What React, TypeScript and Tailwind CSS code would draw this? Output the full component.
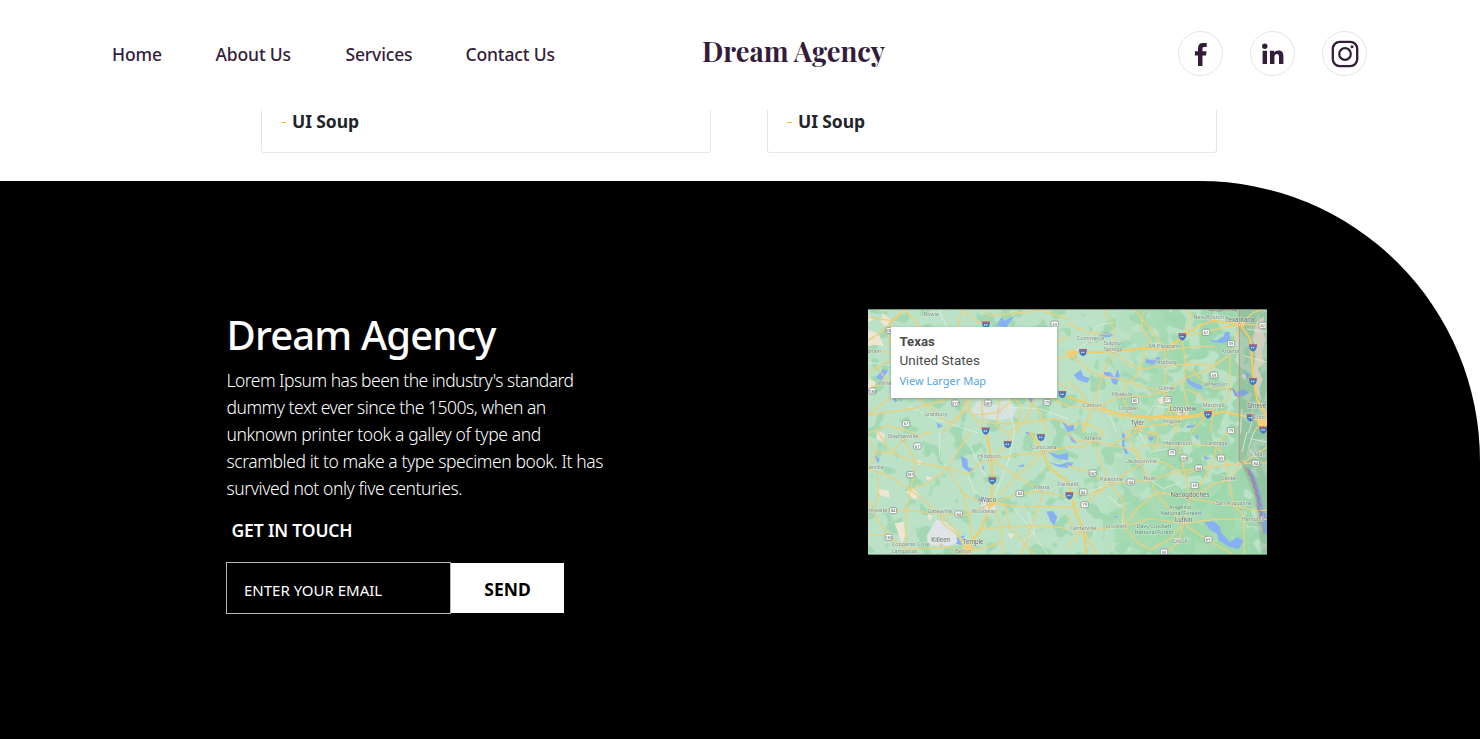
import React from "react";

type Quad = { x: number; y: number; minor: string[]; roads: string[]; water: string[]; sand: string[] };

const quads: Quad[] = [
  {
    x: 0,
    y: 0,
    minor: ["M0 160 L70 170 L95 60", "M210 0 L240 60", "M120 290 L200 330 L330 372", "M420 270 L440 372 M330 290 L520 300 L600 330"],
    roads: [
      "M0 25 L70 35 L110 0", "M0 95 Q60 60 110 0", "M110 0 L160 60", "M270 55 L280 0 L350 55", "M345 0 L365 20 L520 5 L600 30",
      "M68 40 Q55 80 68 115", "M0 190 L70 150", "M0 130 Q50 125 68 130", "M10 235 L60 220 L25 170", "M68 265 L0 318 L130 300 L240 270",
      "M68 230 L150 265 L240 345 L300 300 L310 267", "M0 372 L60 350 L140 372", "M220 372 L270 330 L300 270", "M285 270 L350 372",
      "M310 320 L390 310 L440 270 L460 290 L445 372", "M340 270 L345 340 L420 345 L560 330 L600 340", "M395 267 L385 350 L420 372 L470 340 L500 270",
      "M470 267 L510 300 L540 372", "M567 220 L600 240", "M567 150 L600 140", "M545 267 L600 290", "M567 100 L600 80",
    ],
    water: ["M385 50 L400 25 L410 35 L440 20 L415 55Z", "M25 205 L45 180 L60 185 L40 215Z", "M75 265 L90 275 L80 280Z", "M340 300 L355 320 L345 325Z", "M385 305 L400 285 L405 300 L390 325Z", "M205 340 L225 350 L210 358Z", "M580 335 L600 350 V370Z", "M480 267 L495 270 L490 285Z"],
    sand: ["M0 65 L30 75 L45 110 L20 105 L0 110Z", "M45 15 L65 30 L55 50 L40 38Z", "M5 210 L22 222 L12 240 L0 238Z", "M0 20 L15 30 L0 38Z"],
  },
  {
    x: 597,
    y: 0,
    minor: ["M10 140 L60 100 L90 50 L140 40", "M120 300 L150 372 M210 355 L260 290 L330 300", "M525 300 L520 372 M545 372 L560 320 L600 350", "M540 60 L600 70 M530 140 L600 160"],
    roads: [
      "M0 128 L45 130 L140 128 L220 118 L295 122 L350 80 L400 48 L440 35 L518 45 L600 50",
      "M295 122 L330 100 L345 85 L450 60 L518 45", "M518 45 L550 90 L560 215 L570 270 L590 310 L600 320",
      "M110 0 L140 60 L140 128 L110 190 L75 295 L50 372", "M200 0 L250 60 L295 122 L292 250 L330 372",
      "M0 130 L60 180 L100 200 L160 210 L230 235 L300 245", "M140 128 L180 160 L220 182 L290 170 L380 165 L440 170 L490 135",
      "M0 262 L80 290 L160 315 L240 325 L315 328 L430 318 L470 308 L550 325 L600 340", "M0 292 L75 298 L165 325 L350 328 L430 318",
      "M75 298 L165 262 L235 262 L300 245 L360 205 L430 180 L490 135 L518 45", "M235 0 Q210 50 240 80 T230 110 Q235 150 218 180",
      "M345 85 L355 160 L350 240 L365 300 L350 318", "M490 135 L485 270 L440 300 L430 372", "M0 40 Q60 80 130 75", "M45 372 L75 298 L40 250 L0 215",
      "M165 262 L175 230 L205 205 L218 180", "M165 262 L185 300 L210 355 L300 345 L440 300", "M215 355 L245 335 L310 305 L350 315", "M210 355 L170 372",
      "M300 245 L310 300 L350 315 L320 372", "M355 160 L400 210 L440 240 L485 235", "M350 0 L375 20 L350 80", "M360 240 L400 260 L440 300 L370 372", "M518 45 L560 10 L590 0", "M600 350 L570 355 L560 372", "M0 350 Q60 330 110 372", "M295 122 L400 112 L443 112",
    ],
    water: [
      "M97 78 L118 68 L138 76 L130 84 L112 84Z", "M425 90 L448 95 L470 82 L475 68 L489 70 L488 95 L465 102 L440 100Z",
      "M20 198 L42 182 L48 200 L68 208 L62 222 L32 212Z", "M110 188 L130 190 L142 205 L152 180 L158 200 L150 228 L138 224 L130 206 L112 198Z",
      "M235 150 L258 154 L275 142 L283 155 L262 168 L238 162Z", "M355 200 L370 215 L405 230 L404 242 L380 236 L362 222Z",
      "M495 238 L510 250 L525 240 L548 250 L530 262 L505 262Z", "M540 318 L560 320 L556 338 L540 332Z", "M0 350 L20 345 L22 362 L0 370Z", "M358 350 L385 348 L380 355 L360 358Z", "M530 185 L550 198 L540 208Z",
    ],
    sand: ["M570 40 L590 25 L582 60 L595 90 L582 130 L590 160 L570 180 L585 210 L575 240 L580 270 L565 240 L560 190 L568 130 L560 90Z", "M275 270 L295 262 L300 278 L280 284Z", "M525 200 L535 195 L534 210Z"],
  },
  {
    x: 0,
    y: 369,
    minor: ["M215 0 L215 75 L238 108", "M305 40 L345 120 L370 150", "M440 0 L420 90 L380 190", "M430 220 L480 280 L540 369", "M480 240 L500 300 L440 350", "M300 130 L320 180 L360 200"],
    roads: [
      "M0 20 L25 60 L70 62 L105 22 L190 0", "M30 0 L70 62 L145 92 L238 108 L300 128 L340 90 L370 82", "M25 60 L0 110", "M105 22 L145 92 L128 172 L115 235 L112 352",
      "M0 112 L60 130 L128 175 L215 245 L270 300 L295 350", "M128 172 L185 150 L238 108 L300 10 L305 0", "M238 108 L285 185 L300 240 L312 325",
      "M355 0 L370 82 L374 145 L370 215 L340 290 L290 360", "M370 82 L418 38 L430 0", "M370 82 L440 70 L527 60 L600 45", "M370 82 L450 135 L520 178 L600 195",
      "M485 0 L527 60 L540 105 L600 150", "M390 190 L450 130 L527 60", "M370 215 L450 185 L520 178", "M0 238 L115 235 L215 245 L290 250 L370 215 L450 222 L600 225",
      "M0 200 L15 240 L60 310 L112 352 L180 350 L240 345 L290 360", "M28 130 L32 190 L15 240", "M0 310 L60 310", "M385 230 L400 300 L405 369", "M410 215 L425 285 L470 335 L500 369",
      "M290 350 L340 290 L430 285 L530 280 L600 290", "M290 360 L340 350 L405 330", "M527 178 L510 230 L470 335 L460 369", "M285 185 L345 215", "M215 245 L225 275 L270 310 L292 350",
    ],
    water: ["M278 72 L298 82 L300 105 L318 112 L305 122 L284 105Z", "M328 205 L345 190 L350 212 L338 218Z", "M538 58 L570 70 L600 62 V85 L572 80 L558 76Z", "M540 90 L575 98 L600 90 V108 L572 104Z", "M535 238 L555 238 L568 255 L558 282 L548 268Z", "M258 320 L290 310 L280 340 L265 335Z", "M20 72 L35 80 L30 95Z", "M448 102 L470 96 L465 106Z", "M470 0 L490 0 L482 10Z", "M342 100 L350 108 L345 115Z"],
    sand: ["M28 0 L48 5 L45 28 L28 20Z", "M115 180 L135 172 L152 190 L140 200Z", "M28 172 L60 178 L62 195 L38 188Z", "M82 275 L105 272 L110 310 L102 332 L88 290Z", "M150 85 L160 90 L152 98Z", "M420 305 L435 308 L430 318Z", "M180 248 L192 252 L185 262Z", "M175 135 L190 138 L180 144Z"],
  },
  {
    x: 597,
    y: 369,
    minor: ["M540 0 L525 60 M560 0 L545 50 L580 90 M600 30 L550 20", "M120 190 L170 230 L165 290", "M250 145 L290 170 L340 150", "M60 180 L120 160 L150 130", "M215 0 L250 60 L300 50"],
    roads: [
      "M0 0 L30 30 L80 25 L130 40 L210 0", "M80 25 L100 90 L130 155 L170 210 L170 283 L210 330 L250 352", "M0 45 L50 45 L80 25 L110 0",
      "M180 0 L220 95 L250 145 L270 190 L350 275", "M130 40 L215 55 L220 95 L130 155 L90 185 L25 240 L50 295 L58 369", "M0 180 L70 188 L130 155",
      "M0 250 L25 300 L50 295", "M50 295 L170 283 L250 260 L350 275", "M130 155 L250 145 L330 118 L395 108 L520 95 L600 92", "M220 95 L290 90 L350 130 L400 110",
      "M335 40 L370 200 L350 275", "M220 40 L335 40 L450 40 L480 0", "M450 40 L480 95 L485 145 L500 220 L530 250 L532 369", "M370 200 L440 155 L485 145 L520 95",
      "M370 200 L500 220 L560 235 L600 235", "M350 275 L440 262 L560 262 L600 262", "M350 275 L400 310 L425 325 L500 369", "M350 275 L335 330 L290 369",
      "M170 283 L210 230 L270 180 L330 190 L370 200", "M0 100 L60 120 L130 155", "M250 352 L310 320 L350 275", "M0 230 L30 210", "M450 40 L430 110 L370 200", "M0 345 L50 295 L90 369", "M530 92 L600 45", "M235 20 L270 0 M260 60 L275 10 L240 0",
    ],
    water: ["M165 0 L175 10 L172 40 L185 65 L175 66 L165 42Z", "M398 252 L410 270 L440 268 L460 285 L460 300 L490 330 L510 315 L530 325 L515 352 L488 345 L455 325 L450 305 L430 295Z", "M540 102 L562 130 L578 180 L590 235 L600 255 V310 L590 300 L578 250 L568 200 L558 160 L545 128Z", "M0 0 L15 12 L32 35 L15 30Z", "M240 15 L252 5 L260 20 L250 28Z", "M382 12 L395 10 L392 25Z", "M0 90 L20 92 L12 105 L0 102Z", "M410 72 L430 78 L415 84Z", "M388 242 L402 238 L404 248Z", "M142 252 L155 254 L148 259Z"],
    sand: ["M320 320 L340 322 L330 332Z"],
  },
];

const places: [number, number, string, boolean?][] = [
  [190, 22, "Bowie"], [19, 133, "aham"], [52, 228, "Mine"], [203, 322, "Granbury"],
  [667, 92, "Commerce"], [735, 107, "Sulphur"], [735, 125, "Springs"], [888, 117, "Mt Pleasant"], [892, 165, "Pittsburg"], [896, 242, "Gilmer"],
  [762, 260, "Mineola"], [672, 293, "Canton"], [780, 302, "Lindale"], [945, 307, "Longview", true], [1036, 293, "Marshall"], [912, 341, "Kilgore"],
  [808, 347, "Tyler", true], [1022, 31, "New Boston"], [1115, 40, "Texarkana", true], [1087, 132, "Atlanta"], [1041, 232, "Jefferson"], [1166, 298, "Shreve", true], [1172, 330, "Bossi"],
  [105, 387, "Stephenville"], [527, 420, "Corsicana"], [364, 446, "Hillsboro"], [25, 480, "erville"], [521, 541, "Mexia"], [361, 579, "Waco", true], [347, 612, "Woodway"],
  [215, 612, "Gatesville"], [30, 608, "thwaite"], [218, 700, "Killeen", true], [315, 705, "Temple", true], [128, 712, "Copperas Cove"], [110, 732, "Lampasas"], [286, 731, "Belton"], [600, 530, "Fairfield"],
  [675, 394, "Athens"], [930, 409, "Henderson"], [1044, 408, "Carthage"], [820, 462, "Jacksonville"], [846, 512, "Rusk"], [730, 516, "Palestine"],
  [1083, 512, "Center"], [966, 565, "Nacogdoches", true], [1097, 587, "San Augustine"], [947, 638, "Lufkin", true], [936, 601, "Angelina"], [936, 619, "National Forest"],
  [858, 657, "Davy Crockett"], [858, 676, "National Forest"], [744, 656, "Crockett"], [645, 662, "Centerville"], [937, 702, "Diboll"], [1155, 637, "Hemphill"], [1176, 440, "Man"],
];

const dots = [[664, 98], [735, 128], [890, 124], [891, 170], [896, 247], [765, 267], [674, 298], [782, 308], [945, 315], [1038, 300], [808, 356], [913, 347], [1024, 36], [1115, 48], [1085, 137], [1040, 239], [105, 392], [527, 429], [364, 452], [521, 547], [361, 584], [345, 597], [215, 617], [15, 613], [220, 708], [314, 713], [675, 399], [930, 413], [1044, 413], [818, 467], [847, 516], [729, 524], [1083, 516], [966, 570], [1097, 592], [947, 645], [766, 653], [645, 668]];

const routes: [number, number, string][] = [
  [65, 64, "281"], [560, 45, "69"], [14, 246, "180"], [262, 282, "377"], [360, 282, "287"], [537, 280, "175"], [114, 344, "67"],
  [1014, 70, "67"], [1089, 104, "59"], [1038, 198, "59"], [801, 275, "80"], [899, 272, "271"], [1089, 365, "79"], [1184, 49, "82"],
  [148, 411, "67"], [127, 497, "281"], [75, 605, "84"], [272, 615, "84"], [62, 685, "183"], [455, 554, "84"],
  [912, 431, "79"], [947, 447, "259"], [1059, 447, "59"], [992, 477, "84"], [674, 492, "287"], [788, 519, "84"], [646, 549, "84"], [650, 587, "79"], [980, 530, "59"], [1163, 463, "84"], [1021, 691, "69"], [888, 729, "59"],
];

const shields = [[354, 48], [583, 256], [353, 366], [645, 130], [943, 83], [1155, 116], [1155, 217], [1020, 317], [1148, 326], [1186, 363], [519, 385], [419, 406], [373, 515], [604, 560]];

function TexasMap() {
  return (
    <svg viewBox="0 0 1197 738" preserveAspectRatio="none" className="block h-full w-full" aria-hidden="true">
      <defs>
        <filter id="woods" x="0" y="0" width="1" height="1" colorInterpolationFilters="sRGB">
          <feTurbulence type="fractalNoise" baseFrequency="0.02" numOctaves="2" seed="7" />
          <feColorMatrix values="0 0 0 0 0.64  0 0 0 0 0.85  0 0 0 0 0.70  18 0 0 0 -10.4" />
        </filter>
        <filter id="forest" x="0" y="0" width="1" height="1" colorInterpolationFilters="sRGB">
          <feTurbulence type="fractalNoise" baseFrequency="0.02" numOctaves="2" seed="12" />
          <feColorMatrix values="0 0 0 0 0.62  0 0 0 0 0.845  0 0 0 0 0.68  18 0 0 0 -7.9" />
        </filter>
        <filter id="soft" x="0" y="0" width="1" height="1">
          <feGaussianBlur stdDeviation="0.9" />
        </filter>
        <linearGradient id="eastward">
          <stop offset=".58" stopColor="#fff" stopOpacity="0" />
          <stop offset=".8" stopColor="#fff" />
        </linearGradient>
        <mask id="east" maskUnits="userSpaceOnUse" x="0" y="0" width="1197" height="738">
          <rect width="1197" height="738" fill="url(#eastward)" />
        </mask>
      </defs>
      <g filter="url(#soft)">
        <rect width="1197" height="738" fill="#bbe2c6" />
        <rect width="1197" height="738" filter="url(#woods)" />
        <g mask="url(#east)">
          <rect width="1197" height="738" filter="url(#forest)" />
        </g>
        <path d="M740 600L860 560L1110 500L1150 738H860L740 700Z" fill="#9fd8ad" opacity=".7" />
        {quads.map((q) => (
          <g key={`${q.x}-${q.y}`} transform={`translate(${q.x} ${q.y})`} fill="none" strokeLinejoin="round">
            {q.sand.map((d) => <path key={d} d={d} fill="#eee5d3" stroke="#eee5d3" strokeWidth="4" />)}
            {q.water.map((d) => <path key={d} d={d} fill="#86b1f5" />)}
          </g>
        ))}
        <g fill="#e0e4e6">
          <path d="M205 632L232 640L262 665L268 700L245 712L180 708L176 680Z" />
          <path d="M305 310L330 275L380 285L420 272L445 300L435 325L390 335L340 325Z" opacity=".8" />
          <path d="M340 570L375 570L384 600L365 616L338 600Z" />
          <path d="M915 300L955 295L960 320L935 325Z" />
        </g>
        <path d="M1114 0H1197V738H1180L1160 560L1114 455Z" fill="#66796b" opacity=".2" />
        {quads.map((q) => (
          <g key={`${q.x}-${q.y}`} transform={`translate(${q.x} ${q.y})`} fill="none" strokeLinejoin="round">
            {q.minor.map((d) => <path key={d} d={d} stroke="#dfeee1" strokeWidth="2.4" />)}
            {q.roads.map((d) => <path key={d} d={d} stroke="#ebd07f" strokeWidth="4" />)}
          </g>
        ))}
        <g fill="none" stroke="#f6cb62" strokeWidth="5.5">
          <path d="M597 128L645 130L737 128L817 118L892 122L947 80L997 48L1037 35L1115 45L1147 90L1157 215L1167 270L1197 320" />
          <path d="M597 262L677 290L757 315L837 325L1027 318L1067 308L1147 325L1197 340" />
          <path d="M355 369L370 451L374 514L370 584L340 659L290 729" />
          <path d="M485 369L527 429L540 474L600 519L622 609L647 664L655 738" />
        </g>
        <g fill="#f4cd79">
          <path d="M356 577L380 572L384 585L370 596L355 590Z" /><path d="M285 712L310 706L322 720L295 738H280Z" />
          <path d="M798 345L820 348L822 366L800 362Z" /><path d="M1100 40L1130 38L1128 54L1105 54Z" />
          <path d="M1165 325L1197 315V360L1170 350Z" /><path d="M597 128L618 120L625 142L600 148Z" />
        </g>
        <path d="M1114 0V458L1125 462L1135 485L1148 500L1157 520L1160 545L1170 570L1168 595L1180 610L1168 630L1180 650L1188 675" fill="none" stroke="#cc8177" strokeWidth="2.5" />
        <path d="M1135 480l12 8l-6 9l12 5l0 18l11 3l-8 9l11 12l-4 12l11 8l-5 14l10 7l-10 17l13 9l-8 15l14 5l-8 10M1084 240h12l4 16l12 8M1024 4l30 2l18-4l35 3" fill="none" stroke="#c25b69" strokeWidth="2.6" opacity=".75" />
        {dots.map(([x, y]) => <circle key={`${x}-${y}`} cx={x} cy={y} r="3.6" fill="#faf7ee" stroke="#97958d" strokeWidth="1.6" />)}
        {routes.map(([x, y, n]) => (
          <g key={`${x}-${y}`}>
            <rect x={x - 11} y={y - 9} width="22" height="18" rx="4" fill="#fafafa" stroke="#75837a" strokeWidth="2" />
            <text x={x} y={y + 5} textAnchor="middle" fontSize="12" fill="#58605b">{n}</text>
          </g>
        ))}
        {shields.map(([x, y]) => (
          <g key={`${x}-${y}`} transform={`translate(${x} ${y})`}>
            <path d="M-11-11Q-5-8 0-11Q5-8 11-11Q14 6 0 12Q-14 6-11-11Z" fill="#4678c0" />
            <path d="M-11-11Q-5-8 0-11Q5-8 11-11L12-6H-12Z" fill="#c35b66" />
            <path d="M-6 0H6" stroke="#dce8f8" strokeWidth="4" strokeDasharray="4 2" />
          </g>
        ))}
        <g textAnchor="middle" stroke="#e3efe5" strokeOpacity=".7" strokeWidth="3" paintOrder="stroke">
          {places.map(([x, y, name, big]) => (
            <text key={`${x}-${y}`} x={x} y={y} fontSize={big ? 19 : 17} fill={name.includes("National") || name === "Angelina" || name.startsWith("Davy") ? "#5d9270" : big ? "#6a716c" : "#869089"}>{name}</text>
          ))}
        </g>
      </g>
      <path d="M0 1.5H1197" stroke="#5e7765" strokeWidth="3" opacity=".7" />
      <path d="M0 736.5H1197" stroke="#314637" strokeWidth="3" opacity=".5" />
    </svg>
  );
}

function Social({ label, children }: { label: string; children: React.ReactNode }) {
  return (
    <a href="#" aria-label={label} className="flex size-[45px] items-center justify-center rounded-full border border-[#e6e4e7] text-[#341c3b]">
      {children}
    </a>
  );
}

function Testimonial() {
  return (
    <article className="flex h-[43px] w-[450px] rounded-b-[3px] border border-t-0 border-[#e7e7e7] pl-[19px]">
      <span className="mt-3 mr-[6px] h-px w-[5px] bg-[#fbb914]" />
      <p className="-mt-px text-[17.5px] leading-6 font-bold tracking-[-0.1px] text-[#212529]">UI Soup</p>
    </article>
  );
}

export default function App() {
  return (
    <div className="h-[739px] w-[1480px] overflow-hidden bg-white font-['Noto_Sans',sans-serif]">
      <header className="flex h-[110px] items-start">
        <nav className="flex w-[590px] pt-[41px] pl-28 text-[17.5px] leading-[26px] font-medium tracking-[-0.15px] text-[#341c3b]">
          <a href="#" className="w-[103.5px] whitespace-nowrap">Home</a>
          <a href="#" className="w-[130px] whitespace-nowrap">About Us</a>
          <a href="#" className="w-[120px] whitespace-nowrap">Services</a>
          <a href="#" className="whitespace-nowrap">Contact Us</a>
        </nav>
        <div className="ml-[112px] w-[476px] pt-8 font-['Playfair_Display','Liberation_Serif',serif] text-[27.4px] leading-[38px] font-bold whitespace-nowrap text-[#341c3b]">
          Dream Agency
        </div>
        <div className="flex gap-[27px] pt-[31px]">
          <Social label="Facebook">
            <svg width="14" height="24" viewBox="0 0 14 24" fill="currentColor"><path d="M4 24V13.6H.9V9.2H4V6.2C4 2.8 5.9.9 9 .9h3.7v4.2h-2.4c-1.4 0-1.8.6-1.8 1.8v2.3h4.1l-.6 4.4H8.5V24Z" /></svg>
          </Social>
          <Social label="LinkedIn">
            <svg width="22" height="22" viewBox="0 0 22 22" fill="currentColor"><circle cx="2.8" cy="3.2" r="2.7" /><path d="M.6 7.7H5V21H.6ZM8 7.7h4.2v1.9c.9-1.4 2.3-2.2 4.2-2.2 3.7 0 5 2.1 5 6V21H17v-6.8c0-1.8-.3-3.1-2-3.1-1.9 0-2.6 1.3-2.6 3.3V21H8Z" /></svg>
          </Social>
          <Social label="Instagram">
            <svg width="28" height="28" viewBox="0 0 28 28" fill="none" stroke="currentColor"><rect x="1.8" y="1.8" width="24.4" height="24.4" rx="7" strokeWidth="2.3" /><circle cx="14" cy="14" r="5.8" strokeWidth="2.2" /><circle cx="21" cy="6.8" r="1.5" fill="currentColor" stroke="none" /></svg>
          </Social>
        </div>
      </header>

      <section className="flex h-[71px] gap-14 pl-[261px]">
        <Testimonial />
        <Testimonial />
      </section>

      <footer className="flex h-[558px] rounded-tr-[280px] bg-black pl-[226.5px] text-white">
        <div className="w-[641.5px] pt-[127px]">
          <h2 className="text-[40px] leading-[54px] font-medium tracking-[-0.85px]">Dream Agency</h2>
          <p className="mt-[5px] text-[17.5px] leading-[27px] font-light tracking-[-0.42px] whitespace-nowrap">
            <span className="tracking-[-0.53px]">Lorem Ipsum has been the industry&apos;s standard</span><br />
            <span className="tracking-[-0.48px]">dummy text ever since the 1500s, when an</span><br />
            <span className="tracking-[-0.38px]">unknown printer took a galley of type and</span><br />
            scrambled it to make a type specimen book. It has<br />
            survived not only five centuries.
          </p>
          <h3 className="mt-[15px] pl-[5px] text-[17.5px] leading-[27px] font-semibold tracking-[-0.15px]">GET IN TOUCH</h3>
          <form className="mt-[18px] -ml-[0.5px] flex items-center">
            <input placeholder="ENTER YOUR EMAIL" className="h-[52px] w-[225px] border border-[#b6b6b6] bg-black pt-1 pr-4 pl-[17px] text-[15px] outline-none placeholder:text-white placeholder:opacity-100" />
            <button type="button" className="h-[50px] w-[113px] bg-white pt-0.5 text-[17.5px] font-bold text-black">SEND</button>
          </form>
        </div>
        <div className="relative mt-32 h-[246px] w-[399px] font-['Roboto',sans-serif]">
          <TexasMap />
          <div className="absolute top-[18px] left-[23px] h-[71px] w-[166px] bg-white pt-[6px] pl-[8.5px] whitespace-nowrap text-[#4a4a4a] shadow-[0_1px_3px_rgba(0,0,0,0.3)]">
            <p className="text-[13.2px] leading-[18px] font-bold">Texas</p>
            <p className="text-[13.5px] leading-[19px]">United States</p>
            <p className="mt-[2px] font-['Noto_Sans',sans-serif] text-[11px] leading-[17px] text-[#55a4dd]">View Larger Map</p>
          </div>
        </div>
      </footer>
    </div>
  );
}
